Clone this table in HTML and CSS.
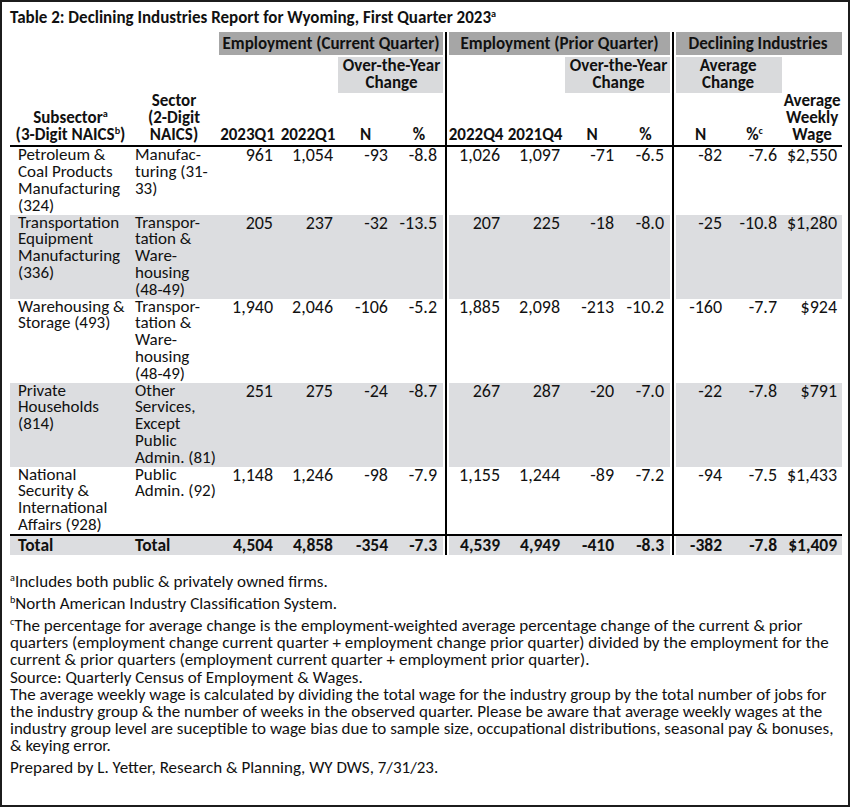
FILE: index.html
```html
<!DOCTYPE html>
<html lang="en">
<head>
<meta charset="utf-8">
<title>Table 2: Declining Industries Report for Wyoming</title>
<link rel="stylesheet" href="styles.css">
</head>
<body>
<div class="page">
  <h1 class="title">Table 2: Declining Industries Report for Wyoming, First Quarter 2023<sup>a</sup></h1>
  <table class="report">
    <colgroup>
      <col class="w-sub"><col class="w-sec"><col class="w-61"><col class="w-60"><col class="w-55"><col class="w-52">
      <col class="w-60"><col class="w-60"><col class="w-54"><col class="w-53"><col class="w-55"><col class="w-55"><col class="w-60">
    </colgroup>
    <thead>
      <tr class="row-group">
        <th colspan="2"></th>
        <th colspan="4" class="group gap-l pre">Employment (Current Quarter)</th>
        <th colspan="4" class="group divider pre">Employment (Prior Quarter)</th>
        <th colspan="3" class="group divider">Declining Industries</th>
      </tr>
      <tr class="row-sub">
        <th colspan="4"></th>
        <th colspan="2" class="sub pre">Over-the-Year<br>Change</th>
        <th colspan="2" class="divider"></th>
        <th colspan="2" class="sub pre">Over-the-Year<br>Change</th>
        <th colspan="2" class="sub divider">Average<br>Change</th>
        <th></th>
      </tr>
      <tr class="row-cols">
        <th>Subsector<sup>a</sup><br>(3-Digit NAICS<sup>b</sup>)</th>
        <th>Sector<br>(2-Digit<br>NAICS)</th>
        <th>2023Q1</th>
        <th>2022Q1</th>
        <th>N</th>
        <th>%</th>
        <th class="divider">2022Q4</th>
        <th>2021Q4</th>
        <th>N</th>
        <th>%</th>
        <th class="divider">N</th>
        <th>%<sup>c</sup></th>
        <th>Average<br>Weekly<br>Wage</th>
      </tr>
    </thead>
    <tbody>
      <tr>
        <td class="txt first">Petroleum &amp;<br>Coal Products<br>Manufacturing<br>(324)</td>
        <td class="txt">Manufac-<br>turing (31-<br>33)</td>
        <td>961</td><td>1,054</td><td>-93</td><td class="pre">-8.8</td>
        <td class="divider">1,026</td><td>1,097</td><td>-71</td><td class="pre">-6.5</td>
        <td class="divider">-82</td><td>-7.6</td><td>$2,550</td>
      </tr>
      <tr class="shade">
        <td class="txt first">Transportation<br>Equipment<br>Manufacturing<br>(336)</td>
        <td class="txt">Transpor-<br>tation &amp;<br>Ware-<br>housing<br>(48-49)</td>
        <td>205</td><td>237</td><td>-32</td><td class="pre">-13.5</td>
        <td class="divider">207</td><td>225</td><td>-18</td><td class="pre">-8.0</td>
        <td class="divider">-25</td><td>-10.8</td><td>$1,280</td>
      </tr>
      <tr>
        <td class="txt first">Warehousing &amp;<br>Storage (493)</td>
        <td class="txt">Transpor-<br>tation &amp;<br>Ware-<br>housing<br>(48-49)</td>
        <td>1,940</td><td>2,046</td><td>-106</td><td class="pre">-5.2</td>
        <td class="divider">1,885</td><td>2,098</td><td>-213</td><td class="pre">-10.2</td>
        <td class="divider">-160</td><td>-7.7</td><td>$924</td>
      </tr>
      <tr class="shade">
        <td class="txt first">Private<br>Households<br>(814)</td>
        <td class="txt">Other<br>Services,<br>Except<br>Public<br>Admin. (81)</td>
        <td>251</td><td>275</td><td>-24</td><td class="pre">-8.7</td>
        <td class="divider">267</td><td>287</td><td>-20</td><td class="pre">-7.0</td>
        <td class="divider">-22</td><td>-7.8</td><td>$791</td>
      </tr>
      <tr>
        <td class="txt first">National<br>Security &amp;<br>International<br>Affairs (928)</td>
        <td class="txt">Public<br>Admin. (92)</td>
        <td>1,148</td><td>1,246</td><td>-98</td><td class="pre">-7.9</td>
        <td class="divider">1,155</td><td>1,244</td><td>-89</td><td class="pre">-7.2</td>
        <td class="divider">-94</td><td>-7.5</td><td>$1,433</td>
      </tr>
      <tr class="shade total">
        <td class="txt first">Total</td>
        <td class="txt">Total</td>
        <td>4,504</td><td>4,858</td><td>-354</td><td class="pre">-7.3</td>
        <td class="divider">4,539</td><td>4,949</td><td>-410</td><td class="pre">-8.3</td>
        <td class="divider">-382</td><td>-7.8</td><td>$1,409</td>
      </tr>
    </tbody>
  </table>
  <div class="notes">
    <p class="gap"><sup>a</sup>Includes both public &amp; privately owned firms.</p>
    <p class="gap"><sup>b</sup>North American Industry Classification System.</p>
    <p class="tight"><sup>c</sup>The percentage for average change is the employment-weighted average percentage change of the current &amp; prior<br>quarters (employment change current quarter + employment change prior quarter) divided by the employment for the<br>current &amp; prior quarters (employment current quarter + employment prior quarter).</p>
    <p>Source: Quarterly Census of Employment &amp; Wages.</p>
    <p class="gap">The average weekly wage is calculated by dividing the total wage for the industry group by the total number of jobs for<br>the industry group &amp; the number of weeks in the observed quarter. Please be aware that average weekly wages at the<br>industry group level are suceptible to wage bias due to sample size, occupational distributions, seasonal pay &amp; bonuses,<br>&amp; keying error.</p>
    <p>Prepared by L. Yetter, Research &amp; Planning, WY DWS, 7/31/23.</p>
  </div>
</div>
</body>
</html>
```

FILE: styles.css
```css
* { box-sizing: border-box; }
html, body { margin: 0; padding: 0; background: #fff; }
body {
  font-family: Carlito, Calibri, Lato, sans-serif;
  color: #111;
}
.page {
  width: 850px;
  height: 807px;
  border: 2px solid #1c1c1c;
  padding: 6px 8px 0 8px;
  overflow: hidden;
}
.title {
  margin: 0 0 4px 0;
  font-size: 17px;
  font-weight: 700;
  line-height: 20px;
  white-space: nowrap;
}
sup {
  font-size: 0.6em;
  line-height: 0;
  vertical-align: 0.55em;
}
.report {
  width: 832px;
  table-layout: fixed;
  border-collapse: separate;
  border-spacing: 0;
  font-size: 17px;
  line-height: 16.8px;
}
.w-sub { width: 121px; }
.w-sec { width: 86px; }
.w-61 { width: 61px; }
.w-60 { width: 60px; }
.w-55 { width: 55px; }
.w-54 { width: 54px; }
.w-53 { width: 53px; }
.w-52 { width: 52px; }
.report th, .report td { padding: 0; }
.report th { font-weight: 700; text-align: center; white-space: nowrap; }

.row-group th { height: 25px; vertical-align: middle; }
.row-group th.group { background: #a6a6a6; box-shadow: inset 0 -2px 0 #fff; }
.row-group th.group.pre { box-shadow: inset 0 -2px 0 #fff, inset -2px 0 0 #fff; }
.row-group th.group.divider { box-shadow: inset 0 -2px 0 #fff, inset 2px 0 0 #fff; }
.row-group th.group.divider.pre { box-shadow: inset 0 -2px 0 #fff, inset 2px 0 0 #fff, inset -2px 0 0 #fff; }
.row-group th.group.gap-l.pre { box-shadow: inset 0 -2px 0 #fff, inset 2px 0 0 #fff, inset -2px 0 0 #fff; }

.row-sub th { height: 36px; vertical-align: top; padding-top: 1px; }
.row-sub th.sub { background: #d9dadc; }
.row-sub th.sub.pre { box-shadow: inset -2px 0 0 #fff; }
.row-sub th.sub.divider { box-shadow: inset 2px 0 0 #fff; }

.row-cols th {
  height: 52px;
  vertical-align: bottom;
  padding-bottom: 2px;
  border-bottom: 2px solid #000;
}

.divider { border-left: 2px solid #000; }

.report td {
  vertical-align: top;
  text-align: right;
  padding-right: 5px;
  white-space: nowrap;
  font-size: 18px;
}
.report td.txt { text-align: left; padding-right: 0; padding-left: 4px; font-size: 17px; }
.report td.first { padding-left: 8px; }
.report td.pre { padding-right: 8px; }
.report tbody tr:last-child td { border-top: 2px solid #000; }

.shade td { background: #dcdde0; }
.shade td.pre { box-shadow: inset -2px 0 0 #fff; }
.shade td.divider { box-shadow: inset 2px 0 0 #fff; }
.total td { font-weight: 700; height: 21px; vertical-align: middle; font-size: 17.5px; }
.total td.txt { font-size: 17.5px; }

.notes {
  margin-top: 18px;
  font-size: 17px;
  line-height: 17px;
  white-space: nowrap;
}
.notes p { margin: 0; }
.notes p.gap { margin-bottom: 5px; }
.notes p.tight { margin-bottom: 1px; }
.notes sup { vertical-align: 0.6em; }
```
